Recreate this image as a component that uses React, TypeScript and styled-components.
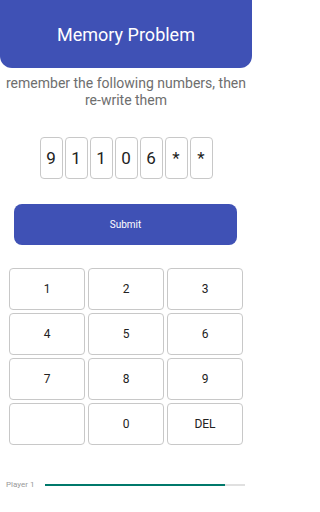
import styled, { createGlobalStyle } from 'styled-components'

const digits = ['9', '1', '1', '0', '6', '*', '*']
const keys = ['1', '2', '3', '4', '5', '6', '7', '8', '9', '', '0', 'DEL']
const progress = 90

export default function App (): JSX.Element {
  return (
    <>
      <GlobalStyle />
      <Screen>
        <Header>
          <h1>Memory Problem</h1>
        </Header>
        <Instructions>
          remember the following numbers, then <NoWrap>re-write</NoWrap> them
        </Instructions>
        <DigitRow>
          {digits.map((d, i) => <DigitBox key={i}>{d}</DigitBox>)}
        </DigitRow>
        <SubmitButton>Submit</SubmitButton>
        <Keypad>
          {keys.map((k, i) => <KeyButton key={i}>{k}</KeyButton>)}
        </Keypad>
        <PlayerRow>
          <PlayerLabel>Player 1</PlayerLabel>
          <ProgressTrack>
            <ProgressFill style={{ width: `${progress}%` }} />
          </ProgressTrack>
        </PlayerRow>
      </Screen>
    </>
  )
}

const GlobalStyle = createGlobalStyle`
  body {
    margin: 0;
    background: #fff;
    font-family: Roboto, 'Liberation Sans', sans-serif;
  }
`

const Screen = styled.div`
  display: flex;
  flex-direction: column;
  width: 252px;
  height: 512px;
`

const Header = styled.header`
  display: flex;
  align-items: center;
  justify-content: center;

  height: 68px;
  border-radius: 0 0 12px 12px;
  background: #3f51b5;

  & > h1 {
    margin: 0;
    color: #fff;
    font-size: 18px;
    font-weight: 400;
  }
`

const Instructions = styled.p`
  margin: 7px 0 0;
  color: #6e6e6e;
  font-size: 14px;
  line-height: 17px;
  text-align: center;
`

const NoWrap = styled.span`
  white-space: nowrap;
`

const DigitRow = styled.div`
  display: flex;
  justify-content: center;
  gap: 2px;
  margin-top: 28px;
`

const DigitBox = styled.div`
  display: flex;
  align-items: center;
  justify-content: center;

  box-sizing: border-box;
  width: 23px;
  height: 42px;
  border: 1px solid #c8c8c8;
  border-radius: 4px;

  color: #222;
  font-size: 17px;
`

const SubmitButton = styled.button`
  box-sizing: border-box;
  width: 223px;
  height: 41px;
  margin: 25px 0 0 14px;
  border: none;
  border-radius: 8px;

  background: #3f51b5;
  color: #fff;
  font-family: inherit;
  font-size: 10px;
`

const Keypad = styled.div`
  display: grid;
  grid-template-columns: repeat(3, 1fr);
  grid-auto-rows: 42px;
  gap: 3px;
  margin: 23px 9px 0;
`

const KeyButton = styled.button`
  box-sizing: border-box;
  border: 1px solid #c8c8c8;
  border-radius: 4px;

  background: #fff;
  color: #222;
  font-family: inherit;
  font-size: 12px;
`

const PlayerRow = styled.div`
  display: flex;
  align-items: center;
  gap: 10px;
  margin-top: 35px;
  padding-left: 6px;
`

const PlayerLabel = styled.span`
  width: 29px;
  color: #999;
  font-size: 8px;
`

const ProgressTrack = styled.div`
  width: 200px;
  height: 2px;
  background: #e0e0e0;
`

const ProgressFill = styled.div`
  height: 100%;
  background: #00796b;
`
